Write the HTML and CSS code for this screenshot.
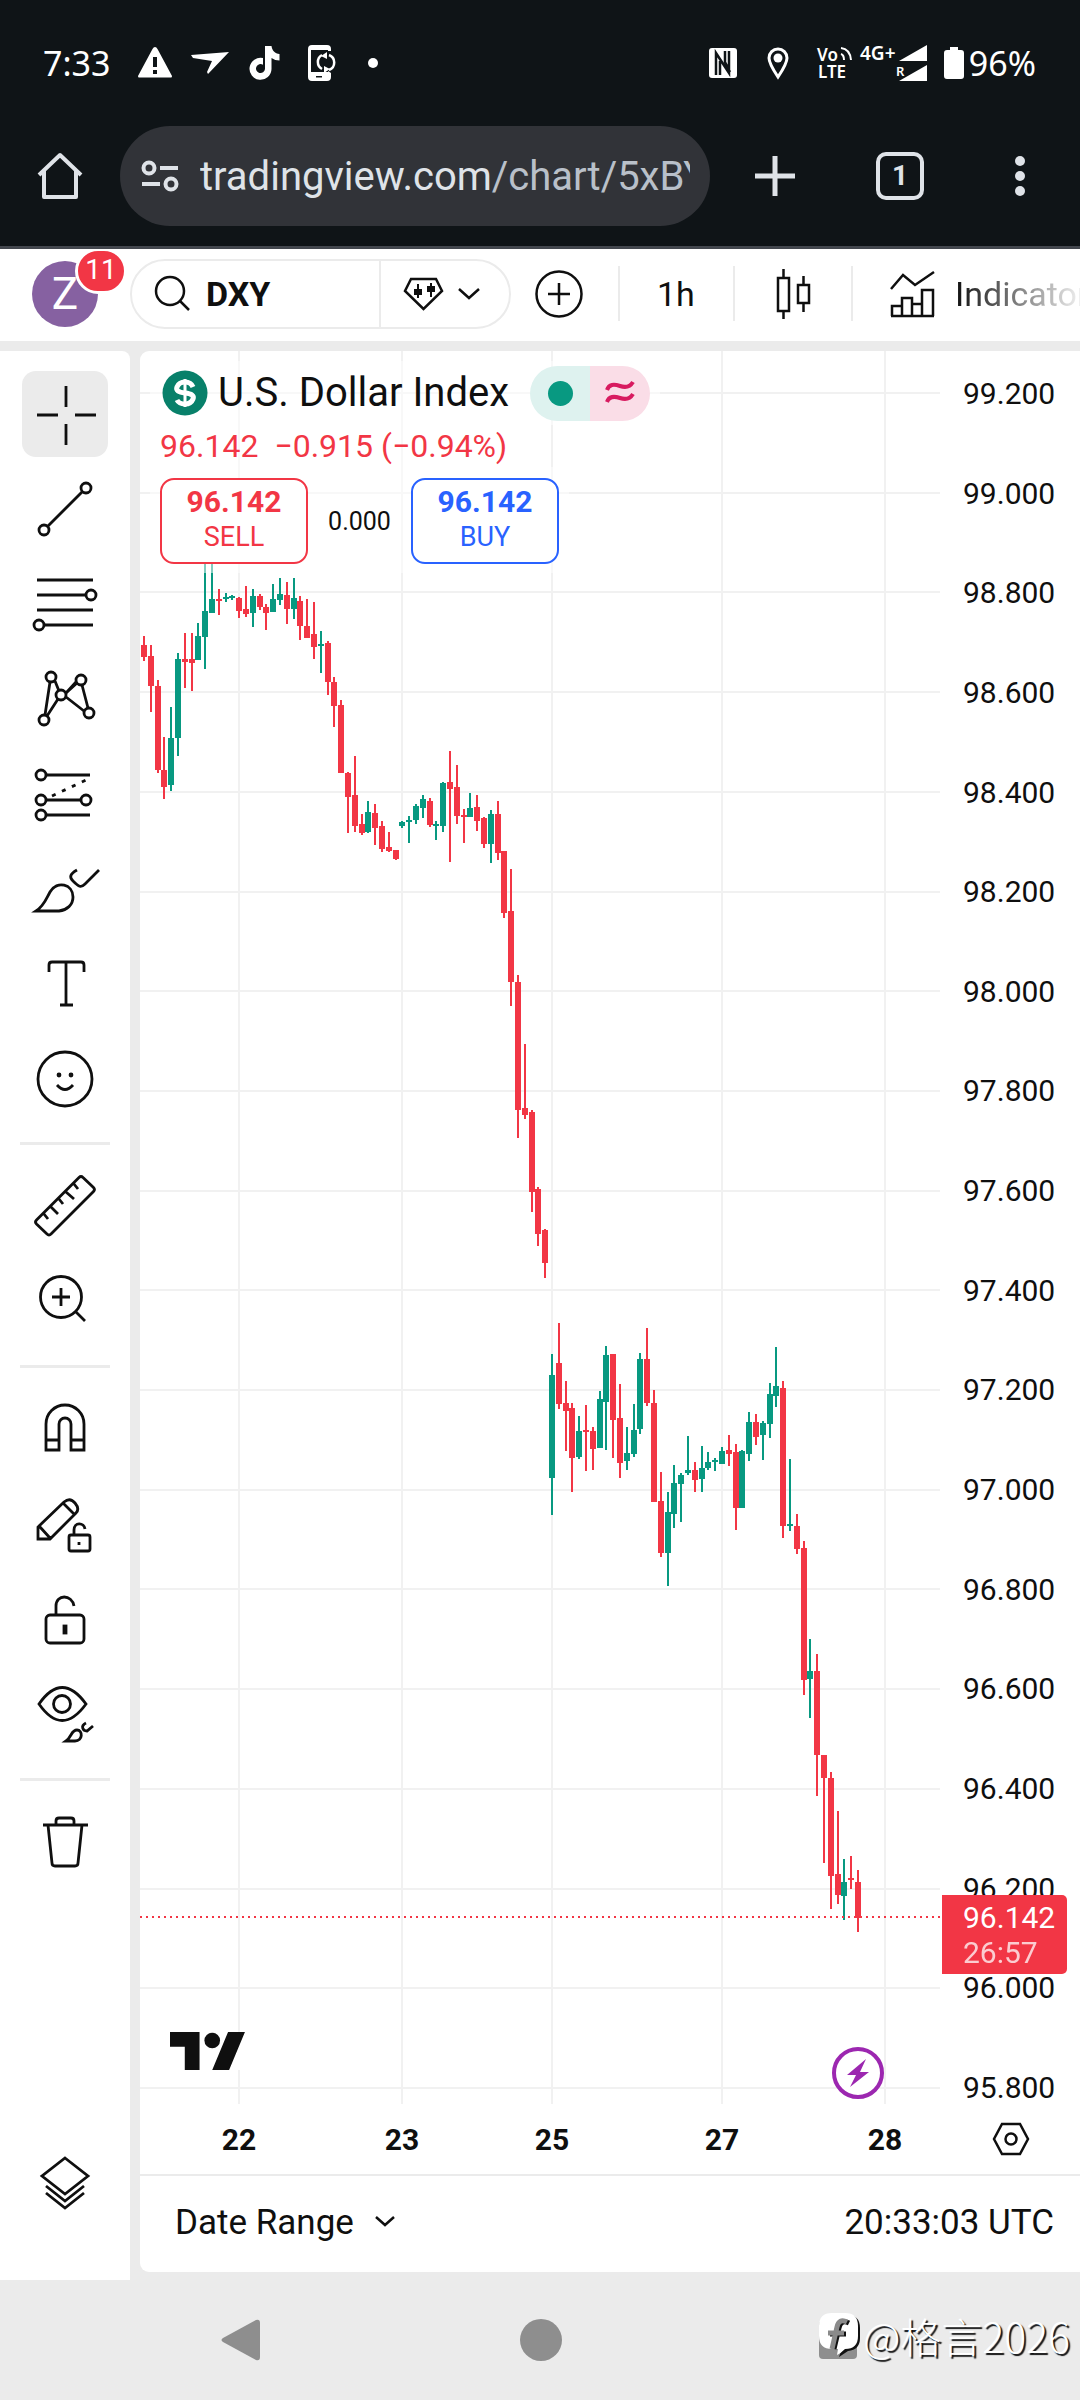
FILE: index.html
```html
<!DOCTYPE html>
<html lang="en">
<head>
<meta charset="utf-8">
<meta name="viewport" content="width=device-width, initial-scale=1">
<title>DXY 96.142 — U.S. Dollar Index</title>
<link rel="stylesheet" href="styles.css">
</head>
<body>
<div class="screen">
  <header class="browser">
    <div class="status">
      <span class="clock">7:33</span>
      <svg class="st-warn" width="36" height="36" viewBox="0 0 36 36"><path fill="#fff" d="M18 2Q19.500 2 20.500 4L35 31Q35 32.500 34 32.500H2Q1 32.500 1 31L15.500 4Q16.500 2 18 2z"/><path fill="#0f1417" d="M16 12h4v10h-4zM16 25h4v4h-4z"/></svg>
      <svg class="st-send" width="40" height="36" viewBox="0 0 40 36"><path fill="#fff" d="M1 10L39 7L18 29L17 27L22 16L3 13z"/></svg>
      <svg class="st-note" width="30" height="36" viewBox="0 0 30 36"><path fill="#fff" d="M15 1h6.500c.5 4.500 3.500 7.500 8 8v6.500c-3 0-5.500-.8-8-2.500v11A11 11 0 1 1 13 13.100v6.700A4.500 4.500 0 1 0 15 24z"/></svg>
      <svg class="st-phone" width="30" height="36" viewBox="0 0 30 36"><path fill="#fff" fill-rule="evenodd" d="M5 0h15q4 0 4 4v2h-3V5H4v22h17v-1l3 2v4q0 4-4 4H5q-4 0-4-4V4q0-4 4-4zM9 31v1.500h6V31z"/><path fill="none" stroke="#fff" stroke-width="2.500" d="M15 24A8 8 0 0 1 15 10M22 10a8 8 0 0 1 0 15"/><path fill="#fff" d="M14 11l6-4v7zM23 24l-6 4v-7z"/></svg>
      <span class="dot"></span>
      <span class="grow"></span>
      <svg class="st-nfc" width="30" height="32" viewBox="0 0 30 32"><rect x="1" y="1" width="28" height="30" rx="3" fill="#fff"/><path fill="none" stroke="#0f1417" stroke-width="2.500" d="M8 28V6l13 20V4M12 28V14M17 4v11l5 10"/></svg>
      <svg class="st-pin" width="22" height="32" viewBox="0 0 22 32"><path fill="none" stroke="#fff" stroke-width="3" d="M11 30C5 21 2 16 2 11a9 9 0 0 1 18 0c0 5-3 10-9 19z"/><circle cx="11" cy="11" r="4.500" fill="#fff"/></svg>
      <svg class="st-lte" width="36" height="34" viewBox="0 0 36 34"><g fill="#fff" font-family="Noto Sans, sans-serif" font-size="17" font-weight="600"><text x="0" y="15">Vo</text><text x="1" y="32">LTE</text></g><path fill="none" stroke="#fff" stroke-width="2" d="M24 8q3 1 3 6M24 2q9 1 10 12"/></svg>
      <svg class="st-sig" width="68" height="38" viewBox="0 0 68 38"><g fill="#fff" font-family="Noto Sans, sans-serif" font-weight="600"><text x="0" y="16" font-size="19">4G+</text><text x="36" y="32" font-size="13">R</text></g><path fill="#fff" d="M67 1v16H39zM67 21v16H39z"/></svg>
      <svg class="st-bat" width="20" height="34" viewBox="0 0 20 34"><path fill="#fff" d="M6 1h8v3h3q3 0 3 3v23q0 3-3 3H3q-3 0-3-3V7q0-3 3-3h3z"/></svg>
      <span class="clock">96%</span>
    </div>
    <div class="address">
      <button class="bare home" aria-label="Home"><svg width="48" height="52" viewBox="0 0 48 52"><path fill="none" stroke="#dfe3e8" stroke-width="4" stroke-linejoin="round" d="M3 25L24 5l21 20M8 21v26h32V21"/></svg></button>
      <a class="url" href="#chart">
        <svg width="40" height="34" viewBox="0 0 40 34" fill="none" stroke="#dfe3e8" stroke-width="4"><circle cx="9" cy="9" r="5.500"/><circle cx="31" cy="25" r="5.500"/><path d="M20 9h18M2 25h18"/></svg>
        <span class="url-text">tradingview.com<span class="path">/chart/5xBYq</span></span>
      </a>
      <button class="bare plus" aria-label="New tab"><svg width="42" height="42" viewBox="0 0 42 42"><path stroke="#dfe3e8" stroke-width="5" d="M21 1v40M1 21h40"/></svg></button>
      <button class="tabs" aria-label="Open tabs">1</button>
      <button class="bare more" aria-label="More"><svg width="12" height="42" viewBox="0 0 12 42" fill="#dfe3e8"><circle cx="6" cy="6" r="5"/><circle cx="6" cy="21" r="5"/><circle cx="6" cy="36" r="5"/></svg></button>
    </div>
  </header>

  <div class="toolbar">
    <button class="avatar" aria-label="Account">Z<span class="badge">11</span></button>
    <div class="symbol">
      <button class="find"><svg width="37" height="37" viewBox="0 0 37 37" fill="none" stroke="#0f0f0f" stroke-width="2.500"><circle cx="16" cy="16" r="14"/><path d="M26 26l9 9"/></svg>DXY</button>
      <button class="kind" aria-label="Favourite symbols">
        <svg width="41" height="34" viewBox="0 0 41 34"><path fill="none" stroke="#0f0f0f" stroke-width="2.500" d="M8 2h25l6 12-18.500 18L2 14z"/><path fill="#0f0f0f" d="M11 12h3V7h2v5h3v6h-3v3h-2v-3h-3zM24 9h3V6h2v3h3v6h-3v5h-2v-5h-3z"/></svg>
        <svg width="22" height="12" viewBox="0 0 22 12"><path fill="none" stroke="#0f0f0f" stroke-width="2.500" d="M1 1l10 9L21 1"/></svg>
      </button>
    </div>
    <button class="bare compare" aria-label="Compare"><svg width="48" height="48" viewBox="0 0 48 48" fill="none" stroke="#0f0f0f" stroke-width="2.500"><circle cx="24" cy="24" r="22.500"/><path d="M24 13v22M13 24h22"/></svg></button>
    <button class="tool-cell interval">1h</button>
    <button class="tool-cell style" aria-label="Candles"><svg width="36" height="52" viewBox="0 0 36 52" fill="none" stroke="#0f0f0f" stroke-width="2.500"><path d="M2 10h11v33H2zM7.500 1v9M7.500 43v8M22 17h11v18H22zM27.500 8v9M27.500 35v9"/></svg></button>
    <button class="tool-cell indicators"><svg width="46" height="48" viewBox="0 0 46 48" fill="none" stroke="#0f0f0f" stroke-width="2.500"><path d="M1 19L13 5l12 10L44 2M2 46V36h10v10M12 36V28h10v18M22 34h10v12M32 34V20h11v26M1 46h43"/></svg><span>Indicators</span></button>
  </div>

  <main class="workspace" id="chart">
    <nav class="sidebar" aria-label="Drawing tools">
      <button class="tool active" aria-label="Cross"><svg viewBox="0 0 86 86"><path d="M15 44h21M53 44h21M44 15v21M44 53v21"/></svg></button>
      <button class="tool" aria-label="Trend line"><svg viewBox="0 0 86 86"><circle cx="64" cy="22" r="5"/><circle cx="22" cy="64" r="5"/><path d="M26 60L60 26"/></svg></button>
      <button class="tool" aria-label="Fib retracement"><svg viewBox="0 0 86 86"><path d="M15 19h56M15 34h48M15 49h56M22 64h49"/><circle cx="69" cy="34" r="5"/><circle cx="17" cy="64" r="5"/></svg></button>
      <button class="tool" aria-label="XABCD pattern"><svg viewBox="0 0 86 86"><path d="M28 26L23 59M33 25l4 10M36 43L25 60M44 37l10-11M44 37l11-10M44 41l18 14M60 29l6 23"/><circle cx="29" cy="21" r="5"/><circle cx="59" cy="24" r="5"/><circle cx="39" cy="39" r="5"/><circle cx="22" cy="64" r="5"/><circle cx="67" cy="57" r="5"/></svg></button>
      <button class="tool" aria-label="Forecast"><svg viewBox="0 0 86 86"><path d="M24 24h44M24 49h35M24 64h44"/><path stroke-dasharray="4 7" d="M30 45l34-16"/><circle cx="19" cy="24" r="5"/><circle cx="19" cy="49" r="5"/><circle cx="64" cy="49" r="5"/><circle cx="19" cy="64" r="5"/></svg></button>
      <button class="tool" aria-label="Brush"><svg viewBox="0 0 86 86"><path d="M14 65C22 60 24 53 28 46C35 34 51 38 51 51C51 59 45 64 37 65zM55 24c-7 4-8 7-4 11 6 6 8 7 12 3L77 24"/></svg></button>
      <button class="tool" aria-label="Text"><svg viewBox="0 0 86 86"><path d="M27 31V24q0-3 3-3h29q3 0 3 3v7M44 21v43M38 64h13"/></svg></button>
      <button class="tool" aria-label="Emoji"><svg viewBox="0 0 86 86"><circle cx="43" cy="43" r="27"/><path d="M35 49q8 9 16 0"/><circle class="solid" cx="37" cy="39" r="1"/><circle class="solid" cx="49" cy="39" r="1"/></svg></button>
      <hr>
      <button class="tool" aria-label="Measure"><svg viewBox="0 0 86 86"><path d="M57 13.500q2-2 4 0l10.500 10q2 2 0 4L29 70q-2 2-4 0L14.500 60q-2-2 0-4zM22 50l4 5M29 43l7 7M37 35l4 5M44 28l8 7M52 20l4 5"/></svg></button>
      <button class="tool" aria-label="Zoom in"><svg viewBox="0 0 86 86"><circle cx="39" cy="38" r="20.500"/><path d="M54 53l9 9M30 38h18M39 29v18"/></svg></button>
      <hr>
      <button class="tool" aria-label="Magnet"><svg viewBox="0 0 86 86"><path d="M24 63V37a19 19 0 0 1 38 0v26H49V37a6 6 0 0 0-12 0v26zM24 53h13M49 53h13"/></svg></button>
      <button class="tool" aria-label="Stay in drawing mode"><svg viewBox="0 0 86 86"><path d="M16 57V45L42 20q6-5 11 1t1 10L28 57zM18 45l10 11M41 21l11 11"/><rect x="47" y="53" width="21" height="16" rx="2"/><path d="M52 53v-5c0-8 10-8 11-1"/><path d="M57 60v3"/></svg></button>
      <button class="tool" aria-label="Lock drawings"><svg viewBox="0 0 86 86"><rect x="24" y="38" width="38" height="28" rx="4"/><path d="M34 38v-9c0-12 16-12 18 0"/><rect class="solid" x="42" y="49" width="2" height="7"/></svg></button>
      <button class="tool" aria-label="Hide drawings"><svg viewBox="0 0 86 86"><path d="M17 32q23-33 47 0q-24 33-47 0z"/><circle cx="40" cy="32" r="8.500"/><path d="M44 69c6-4 5-11 11-11s6 11-2 11zM64 51c-6 3-3 8 1 8l6-5"/></svg></button>
      <hr>
      <button class="tool" aria-label="Remove"><svg viewBox="0 0 86 86"><path d="M21 25h45M34 25v-4q0-3 3-3h12q3 0 3 3v4M26 25l4 38q0 3 3 3h20q3 0 3-3l4-38"/></svg></button>
      <button class="tool last" aria-label="Object tree"><svg viewBox="0 0 86 86"><path d="M43 17l23 18-23 18-23-18zM24 45l19 15 19-15M24 52l19 15 19-15"/></svg></button>
    </nav>

    <section class="panel">
      <div class="pane">
        <div class="plot">
          <svg id="candles" viewBox="0 0 800 1753" role="img" aria-label="Hourly candles, U.S. Dollar Index"></svg>
          <div class="legend">
            <div class="row title">
              <svg width="46" height="46" viewBox="0 0 46 46"><circle cx="23" cy="23" r="22.500" fill="#08806a"/><path fill="none" stroke="#fff" stroke-width="5" d="M31 17q-2-5-8-5t-8 5 8 6 8 6-8 5-8-4"/><path stroke="#fff" stroke-width="3" d="M23 9v28"/></svg>
              <span class="name">U.S. Dollar Index</span>
              <span class="pill"><i><b class="open"></b></i><i class="approx"><svg width="30" height="24" viewBox="0 0 30 24" fill="none" stroke="#d81b60" stroke-width="4"><path d="M2 9c2-6 7-6 13-4s10 1 13-4M2 21c2-6 7-6 13-4s10 1 13-4"/></svg></i></span>
            </div>
            <div class="row change"><span>96.142</span><span>−0.915 (−0.94%)</span></div>
            <div class="row trade">
              <button class="deal sell"><b>96.142</b>SELL</button>
              <span class="spread">0.000</span>
              <button class="deal buy"><b>96.142</b>BUY</button>
            </div>
          </div>
          <a class="logo" href="#chart" aria-label="TradingView"><svg width="76" height="38" viewBox="0 0 36 18"><path fill="#0f0f0f" d="M14 18H7V7H0V0h14zM28 18h-8L27.500 0h8z"/><circle cx="20" cy="4" r="3.700" fill="#0f0f0f"/></svg></a>
        </div>
        <div class="prices">
          <span>99.200</span><span>99.000</span><span>98.800</span><span>98.600</span><span>98.400</span><span>98.200</span><span>98.000</span><span>97.800</span><span>97.600</span><span>97.400</span><span>97.200</span><span>97.000</span><span>96.800</span><span>96.600</span><span>96.400</span><span>96.200</span><span>96.000</span><span>95.800</span>
          <div class="last-price">96.142<small>26:57</small></div>
        </div>
      </div>
      <div class="times">
        <span>22</span><span>23</span><span>25</span><span>27</span><span>28</span>
        <button class="bare" aria-label="Chart settings"><svg width="38" height="34" viewBox="0 0 38 34" fill="none" stroke="#0f0f0f" stroke-width="2.500"><path d="M10 2h18l8 15-8 15H10L2 17z"/><circle cx="19" cy="17" r="5.500"/></svg></button>
      </div>
      <div class="footer">
        <button class="bare range">Date Range <svg width="22" height="12" viewBox="0 0 22 12"><path fill="none" stroke="#0f0f0f" stroke-width="2.500" d="M2 1l9 8 9-8"/></svg></button>
        <button class="bare">20:33:03 UTC</button>
      </div>
    </section>
  </main>

  <footer class="android">
    <button class="bare" aria-label="Back"><svg width="42" height="44" viewBox="0 0 42 44"><path fill="#8e8e8e" d="M36 2q4-1 4 3v34q0 4-4 3L3 24q-3-2 0-4z"/></svg></button>
    <button class="bare" aria-label="Home screen"><svg width="42" height="42" viewBox="0 0 42 42"><circle cx="21" cy="21" r="21" fill="#8e8e8e"/></svg></button>
    <button class="bare" aria-label="Recents"><svg width="38" height="38" viewBox="0 0 38 38"><rect width="38" height="38" rx="4" fill="#8e8e8e"/></svg></button>
    <div class="mark">
      <svg width="42" height="46" viewBox="0 0 42 46"><path fill="#111" d="M14 3h14q13 0 13 13v10q0 12-12 13l-9 6 2-6z"/><path fill="#fff" d="M13 1h13q13 0 13 13v10q0 13-13 13-4 4-8 6l1-6h-6Q0 37 0 24V14Q0 1 13 1z"/><path fill="none" stroke="#111" stroke-width="5" d="M30 11q-8-4-10 5l-5 21M11 22h16"/><path fill="none" stroke="#8a8a8a" stroke-width="5" d="M28 10q-8-4-10 5l-5 22M9 21h16"/></svg>
      <span>@格言2026</span>
    </div>
  </footer>
</div>
<script src="chart.js"></script>
</body>
</html>
```
FILE: styles.css
```css
* { box-sizing: border-box; }
body { margin: 0; background: #ebebeb; color: #0f0f0f; font-family: Roboto, "Noto Sans CJK SC", sans-serif; }
button { font: inherit; color: inherit; padding: 0; border: 0; background: none; cursor: pointer; }
a { color: inherit; text-decoration: none; }
svg { display: block; flex: none; overflow: visible; }
.bare { display: flex; align-items: center; flex: none; }
.grow { flex: 1; }
.screen { display: flex; flex-direction: column; min-height: 100vh; overflow: hidden; }

/* browser chrome */
.browser { background: #0f1417; border-bottom: 3px solid #43474e; padding-bottom: 20px; }
.status { display: flex; align-items: center; height: 126px; padding: 0 44px 0 43px; color: #fff; }
.clock { font: 34px/40px "Noto Sans", sans-serif; }
.st-warn { margin-left: 27px; }
.st-send { margin-left: 17px; }
.st-note { margin-left: 20px; }
.st-phone { margin-left: 27px; }
.dot { width: 10px; height: 10px; border-radius: 50%; background: #fff; margin-left: 31px; }
.st-pin { margin-left: 29px; }
.st-lte { margin-left: 28px; }
.st-sig { margin-left: 7px; }
.st-bat { margin: 0 5px 0 16px; }
.address { display: flex; align-items: center; padding: 0 54px 0 36px; color: #dfe3e8; }
.url { display: flex; align-items: center; flex: 1; min-width: 0; height: 100px; margin-left: 36px; padding: 0 20px; border-radius: 50px; background: #313338; font-size: 40px; gap: 20px; }
.url-text { overflow: hidden; white-space: nowrap; }
.path { color: #b9c0c9; }
.plus { margin-left: 44px; }
.tabs { width: 48px; height: 48px; margin: 0 90px 0 80px; border: 4px solid #dfe3e8; border-radius: 10px; font-size: 28px; font-weight: 700; line-height: 40px; }

/* chart toolbar */
.toolbar { display: flex; align-items: center; height: 92px; padding: 0 0 3px 32px; background: #fff; font-size: 34px; white-space: nowrap; overflow: hidden; }
.avatar { position: relative; flex: none; width: 66px; height: 66px; border-radius: 50%; background: #8661a1; color: #fff; font-size: 44px; }
.badge { position: absolute; left: 43px; top: -13px; width: 52px; height: 46px; border: 3px solid #fff; border-radius: 23px; background: #f23645; font-size: 28px; line-height: 38px; }
.symbol { display: flex; flex: none; width: 381px; height: 70px; margin-left: 32px; border: 2px solid #ebebeb; border-radius: 35px; }
.find { display: flex; align-items: center; flex: 1; gap: 15px; padding-left: 22px; font-size: 34px; font-weight: 700; }
.kind { display: flex; align-items: center; gap: 14px; width: 130px; padding-left: 22px; border-left: 2px solid #ebebeb; }
.compare { margin: 0 35px 0 24px; }
.tool-cell { display: flex; align-items: center; flex: none; height: 55px; border-left: 2px solid #ebebeb; }
.interval { width: 115px; padding-left: 37px; }
.style { width: 118px; padding-left: 41px; }
.indicators { gap: 19px; padding-left: 37px; }
.indicators span { background: linear-gradient(90deg, #0f0f0f, rgba(15, 15, 15, .1) 120px); -webkit-background-clip: text; background-clip: text; color: transparent; }

/* workspace */
.workspace { display: flex; flex: 1; gap: 10px; padding-top: 10px; }
.sidebar { display: flex; flex-direction: column; align-items: center; flex: none; gap: 9px; width: 130px; padding: 20px 0 53px; border-radius: 0 8px 0 0; background: #fff; }
.tool { width: 86px; height: 86px; border-radius: 14px; }
.tool.active { background: #ebebeb; }
.tool.last { margin-top: auto; }
.tool svg { width: 86px; height: 86px; fill: none; stroke: #0f0f0f; stroke-width: 2.8px; }
.tool .solid { fill: #0f0f0f; }
.sidebar hr { width: 90px; height: 24px; margin: 0; border: 0; background: linear-gradient(#ebebeb, #ebebeb) center / 100% 3px no-repeat; }

.panel { flex: 1; min-width: 0; margin-bottom: 8px; border-radius: 9px 0 0 9px; background: #fff; overflow: hidden; }
.pane { display: flex; }
.plot { position: relative; flex: 1; min-width: 0; }
.plot > svg { width: 100%; height: auto; }
.legend { position: absolute; left: 10px; top: 10px; width: max-content; }
.row { display: flex; align-items: center; width: max-content; padding: 0 10px; background: rgba(255, 255, 255, .5); }
.title { height: 64px; padding: 0 10px 0 12px; }
.name { margin: 0 21px 0 10px; font-size: 40px; line-height: 52px; }
.pill { display: flex; border-radius: 28px; overflow: hidden; }
.pill i { display: grid; place-items: center; width: 60px; height: 55px; background: #def2ef; }
.pill .approx { background: #fadde7; }
.open { width: 25px; height: 25px; border-radius: 50%; background: #089981; }
.change { gap: 16px; height: 42px; color: #f23645; font-size: 32px; }
.trade { height: 106px; padding-top: 2px; }
.deal { display: flex; flex-direction: column; align-items: center; width: 148px; height: 86px; padding-top: 4px; border: 2px solid; border-radius: 14px; background: #fff; font-size: 27px; line-height: 35px; }
.deal b { font-size: 30px; line-height: 36px; }
.sell { color: #f23645; }
.buy { color: #2962ff; }
.spread { width: 103px; text-align: center; font-size: 25px; }
.logo { position: absolute; left: 30px; bottom: 34px; background: #fff; }

.prices { position: relative; display: flex; flex-direction: column; justify-content: space-between; width: 140px; padding: 27px 0 0 23px; font-size: 30px; line-height: 32px; }
.last-price { position: absolute; left: 2px; right: 13px; bottom: 130px; height: 79px; padding: 5px 0 0 21px; border-radius: 0 5px 5px 0; background: #f23645; color: #fff; line-height: 35px; }
.last-price small { display: block; font-size: 30px; opacity: .75; }
.times { display: grid; grid-template-columns: 198fr 128fr 172fr 168fr 158fr 116fr; align-items: center; justify-items: center; height: 70px; font-size: 30px; font-weight: 700; }
.times button { margin-right: 22px; }
.footer { display: flex; align-items: center; justify-content: space-between; height: 98px; padding: 0 26px 4px 35px; border-top: 2px solid #ebebeb; font-size: 35px; }
.range { gap: 20px; }

/* system navigation */
.android { position: relative; display: flex; align-items: center; justify-content: space-between; height: 120px; padding: 0 223px 0 220px; }
.mark { position: absolute; right: 10px; top: 30px; display: flex; align-items: center; gap: 2px; color: #fff; font: 300 41px/50px "Noto Sans CJK SC", sans-serif; text-shadow: 2px 2px 1px #111; }
```
FILE: chart.js
```js
// Hourly bars in plot units: [rising, high, body top, body bottom, low]
const bars = [
  [0,285,294,306,310],[0,294,305,335,361],[0,329,335,419,422],[0,386,419,436,448],[1,356,387,434,440],
  [1,302,308,387,405],[0,282,308,311,337],[0,282,308,312,340],[1,272,285,309,309],[1,204,260,286,318],
  [1,204,248,262,262],[0,238,248,250,264],[1,242,246,248,251],[1,244,245,247,249],[0,246,247,260,267],
  [0,235,258,263,266],[1,238,245,262,276],[0,243,245,256,259],[0,253,256,262,279],[1,233,248,261,261],
  [1,227,243,249,254],[0,231,244,258,273],[1,227,247,258,268],[0,245,250,275,289],[0,248,275,287,287],
  [0,251,283,296,308],[1,280,293,295,322],[0,290,292,331,344],[0,326,331,355,376],[0,349,354,422,422],
  [0,421,422,446,482],[0,405,444,475,481],[0,463,473,482,484],[1,450,461,481,482],[0,453,462,477,494],
  [0,470,475,498,501],[0,481,496,500,501],[0,499,499,508,509],
  [1,470,471,475,477],[1,465,469,471,492],[1,453,455,469,473],[1,444,448,457,467],[0,447,450,474,476],
  [1,470,473,475,489],[1,431,432,475,481],[0,400,431,438,511],[0,414,436,465,473],[0,458,464,466,492],
  [1,442,457,466,466],[0,444,456,470,480],[0,466,467,493,497],[1,459,463,493,512],[0,450,463,502,509],
  [0,500,500,562,567],[0,518,560,631,655],[0,624,631,759,787],[0,693,757,764,768],[0,759,761,841,861],
  [0,836,838,883,895],[0,878,879,912,927],
  [1,1003,1024,1127,1164],[0,972,1012,1053,1058],[0,1030,1052,1060,1100],[0,1052,1057,1107,1141],
  [1,1065,1080,1106,1108],[0,1054,1079,1081,1120],[0,1076,1080,1098,1119],[1,1040,1048,1097,1097],
  [1,995,1004,1051,1099],[0,1003,1003,1069,1107],[0,1033,1067,1112,1127],[1,1076,1102,1110,1119],
  [1,1053,1079,1103,1106],[1,1002,1008,1078,1083],[0,977,1008,1052,1055],[0,1039,1052,1151,1151],
  [0,1121,1150,1202,1206],[1,1141,1161,1202,1235],[1,1114,1132,1163,1177],[1,1122,1124,1133,1171],
  [1,1085,1119,1122,1124],[0,1111,1119,1129,1141],
  [1,1095,1117,1128,1141],[1,1101,1111,1117,1119],[1,1107,1109,1111,1120],[1,1096,1100,1113,1113],
  [0,1084,1099,1103,1115],[0,1093,1101,1157,1179],[1,1099,1100,1157,1157],[1,1061,1071,1103,1110],
  [0,1063,1071,1086,1094],[1,1070,1072,1084,1109],[1,1032,1043,1073,1087],[1,996,1035,1045,1056],
  [0,1030,1037,1175,1187],[1,1108,1173,1175,1180],[0,1163,1175,1198,1203],[0,1190,1197,1329,1344],
  [1,1288,1320,1328,1367],[0,1303,1320,1404,1445],[0,1404,1404,1427,1512],[0,1421,1427,1525,1558],
  [0,1460,1523,1544,1553],[1,1508,1531,1545,1569],[0,1505,1527,1529,1538],[0,1519,1531,1567,1581]
];
const parts = [];
let grid = "";
for (let i = 0; i < 18; i++) grid += `M0 ${Math.round(42 + i * 99.7)}H800`;
for (const x of [99, 262, 412, 582, 745]) grid += `M${x} 0V1753`;
parts.push(`<path d="${grid}" stroke="#000" stroke-opacity=".055" stroke-width="2"/>`);
bars.forEach(([up, high, top, bottom, low], i) => {
  const x = Math.round(4 + i * 6.8);
  parts.push(`<path fill="${up ? "#089981" : "#f23645"}" d="M${x - 1} ${high}h2V${low}h-2zM${x - 3} ${top}h6V${bottom}h-6z"/>`);
});
parts.push('<path d="M0 1566H800" stroke="#f23645" stroke-width="2" stroke-dasharray="2 4"/>');
parts.push('<circle cx="718" cy="1722" r="24" fill="#fff" stroke="#9c27b0" stroke-width="4"/>');
parts.push('<path fill="#9c27b0" d="M726 1708l-19 16h9l-6 12 19-15h-9z"/>');
document.getElementById("candles").innerHTML = parts.join("");
```
